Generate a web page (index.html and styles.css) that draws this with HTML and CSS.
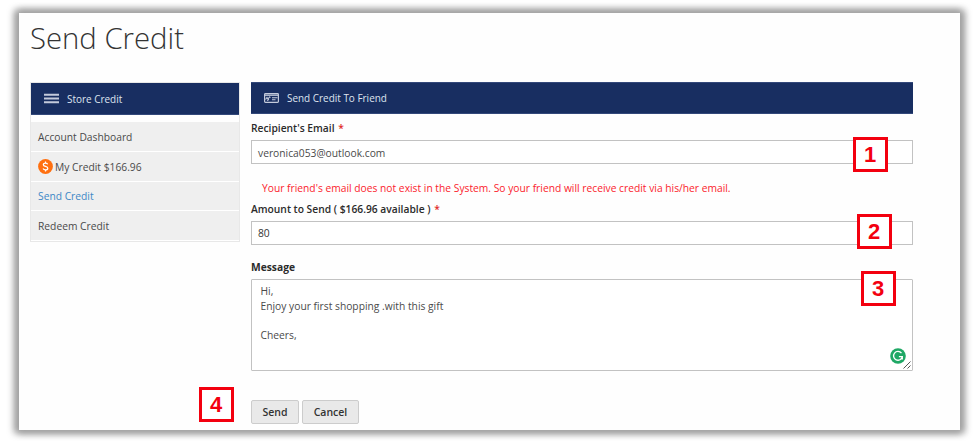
FILE: index.html
```html
<!DOCTYPE html>
<html lang="en">
<head>
<meta charset="utf-8">
<title>Send Credit</title>
<link rel="stylesheet" href="styles.css">
</head>
<body>
<div class="page">
  <h1>Send Credit</h1>
  <div class="columns">
    <nav class="sidebar">
      <div class="bar">
        <svg class="menu-icon" width="15" height="11" viewBox="0 0 15 11"><path d="M0 1.800h15M0 5.500h15M0 9.200h15" stroke="#c3cadb" stroke-width="1.900"/></svg>
        <span>Store Credit</span>
      </div>
      <ul>
        <li>Account Dashboard</li>
        <li>
          <svg class="coin" width="15" height="15" viewBox="0 0 15 15"><circle cx="7.5" cy="7.5" r="7.4" fill="#ff7010"/><path d="M9.7 5.2C9.2 4.4 8.5 4.1 7.5 4.1 6.200 4.100 5.300 4.700 5.300 5.700 5.300 6.800 6.300 7.100 7.500 7.400 8.800 7.700 9.800 8.100 9.800 9.200 9.800 10.300 8.800 10.900 7.500 10.900 6.400 10.900 5.500 10.500 5.100 9.600M7.500 2.600v1.500M7.500 10.900v1.500" fill="none" stroke="#fff" stroke-width="1.2"/></svg>
          <span>My Credit $166.96</span>
        </li>
        <li class="active">Send Credit</li>
        <li class="last">Redeem Credit</li>
      </ul>
    </nav>
    <main>
      <div class="bar main-bar">
        <svg class="card-icon" width="15" height="10" viewBox="0 0 15 10"><rect x=".6" y=".6" width="13.800" height="8.800" rx=".8" fill="none" stroke="#c3cadb" stroke-width="1.200"/><path d="M1 2.200h13" stroke="#c3cadb" stroke-width="1.300"/><path d="M1.500 6.500l1.500-2 1 1.500 1.500-2 1 .5M3 7.500l2-1M8 4.800h5.500M8 6.800h3.500" fill="none" stroke="#c3cadb" stroke-width="1.100"/></svg>
        <span>Send Credit To Friend</span>
      </div>
      <label class="l1">Recipient's Email <em>*</em></label>
      <div class="field email">veronica053@outlook.com<b class="mark m1">1</b></div>
      <p class="notice">Your friend's email does not exist in the System. So your friend will receive credit via his/her email.</p>
      <label class="l2">Amount to Send ( $166.96 available ) <em>*</em></label>
      <div class="field amount">80<b class="mark m2">2</b></div>
      <label class="l3">Message</label>
      <div class="area"><div>Hi,</div><div>Enjoy your first shopping .with this gift</div><div>&nbsp;</div><div>Cheers,</div>
        <b class="mark m3">3</b>
        <svg class="badge" width="16" height="16" viewBox="0 0 16 16"><circle cx="8" cy="8" r="7.800" fill="#1fa865"/><path d="M11.500 5.200A4.400 4.400 0 1 0 12.300 8.600H8.900M12.300 8.600v2.800" fill="none" stroke="#fff" stroke-width="1.300"/></svg>
        <svg class="grip" width="8" height="8" viewBox="0 0 8 8"><path d="M.5 7.500l7-7M4.500 7.500l3-3" stroke="#555" stroke-width="1"/></svg>
      </div>
      <div class="actions"><b class="mark m4">4</b><button class="send">Send</button><button class="cancel">Cancel</button></div>
    </main>
  </div>
</div>
</body>
</html>
```
FILE: styles.css
```css
* { box-sizing: border-box; }
body { margin: 0; height: 443px; padding: 13px 0 0 19px; background: #fff; font-family: "Open Sans", sans-serif; font-size: 10.280px; color: #4a4a4a; }
.page { width: 941px; height: 417px; padding-left: 11px; background: #fefefe; box-shadow: 2px 0 7px 3px #a2a2a2, -2px 0 7px 3px #a2a2a2; display: flow-root; }
h1 { margin: 5px 0 0; font-size: 29.300px; line-height: 40px; font-weight: 300; color: #333; height: 64px; white-space: nowrap; }
.columns { display: flex; gap: 11px; align-items: flex-start; }
.sidebar { width: 210px; height: 160px; border: 1px solid #e8e8e8; }
.bar { height: 32px; background: #182e61; border: 1px solid #33487a; border-width: 0 0 1px; color: #dfe4ef; display: flex; align-items: center; padding-left: 13px; font-size: 9.950px; }
.menu-icon { margin-right: 8px; }
ul { list-style: none; margin: 7px 0 0; padding: 0; }
li { height: 29.800px; padding: 1px 0 0 7px; background: #efefef; border-bottom: 1px solid #fff; display: flex; align-items: center; font-size: 10.280px; white-space: nowrap; }
.coin { margin-right: 2px; }
.active { color: #3d87c6; }
.last { height: 29.500px; }
main { width: 662px; }
.main-bar { border-width: 1px 0; }
.card-icon { margin-right: 8px; }
label { display: block; font-weight: 600; color: #2b2b2b; height: 26px; line-height: 15px; padding-top: 7px; white-space: nowrap; }
em { font-style: normal; color: #e02b27; margin-left: 1px; }
.field { position: relative; height: 24px; border: 1px solid #c2c2c2; background: #fff; padding-left: 6px; line-height: 23px; }
.email { line-height: 25px; }
.notice { margin: 17px 0 0; padding-left: 11px; height: 14px; line-height: 15px; color: #fb1c2c; white-space: nowrap; }
.amount { color: #333; }
.l3 { height: 34px; padding-top: 15px; font-weight: 700; }
.area { position: relative; height: 92px; border: 1px solid #c2c2c2; border-radius: 1px; background: #fff; padding: 4px 0 0 8.500px; line-height: 14.800px; }
.badge { position: absolute; left: 638px; top: 68px; }
.grip { position: absolute; right: 1px; bottom: 1px; }
.actions { position: relative; display: flex; gap: 3px; margin-top: 29px; }
button { height: 24px; padding: 0 0 1px; border: 1px solid #ccc; border-radius: 2px; background: #e9e9e9; color: #333; font: 600 10.500px/20px "Open Sans", sans-serif; }
.send { width: 48px; }
.cancel { width: 57px; }
.mark { position: absolute; width: 35px; height: 35px; padding-right: 1px; border: 3px solid #f3000f; background: #fff; color: #f3000f; font: bold 22px/29px "Liberation Sans", sans-serif; text-align: center; }
.m1 { left: 601px; top: -4px; }
.m2 { left: 605px; top: -8px; }
.m3 { left: 609px; top: -9px; }
.m4 { left: -52px; top: -13px; }
```
